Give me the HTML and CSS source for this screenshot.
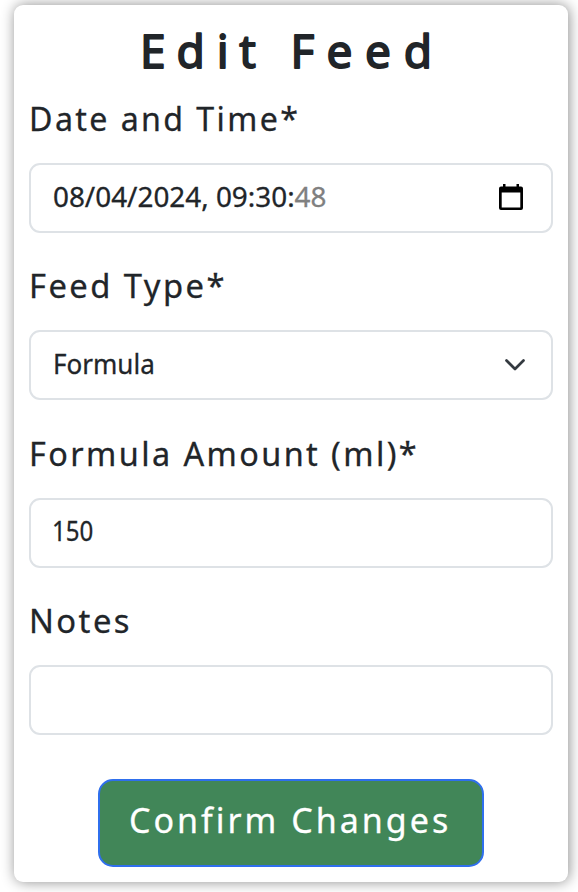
FILE: index.html
```html
<!DOCTYPE html>
<html lang="en">
<head>
<meta charset="utf-8">
<title>Edit Feed</title>
<link rel="stylesheet" href="styles.css">
</head>
<body>
<main class="card">
  <h1 class="title"><svg class="title-art" viewBox="0 0 524 87"><text y="63" x="111 147.500 187.800 210.300 234 261.500 297.500 336 374.800">Edit Feed</text></svg></h1>
  <form class="form">
    <div class="field">
      <label class="label"><span class="text date-label">Date and Time*</span></label>
      <div class="control"><span class="text date">08/04/2024, 09:30:<span class="muted">48</span></span>
        <svg class="calendar" viewBox="0 0 24 26"><path fill="#000" fill-rule="evenodd" d="M4 0h2.500v2.500h11V0H20v2.500h2A2 2 0 0 1 24 4.500V24a2 2 0 0 1-2 2H2A2 2 0 0 1 0 24V4.500a2 2 0 0 1 2-2h2zM2.700 8.500v14.900h18.600V8.500z"/></svg>
      </div>
    </div>
    <div class="field">
      <label class="label"><span class="text type-label">Feed Type*</span></label>
      <div class="control"><span class="text formula">Formula</span>
        <svg class="chevron" viewBox="0 0 20 12"><path d="M1.500 1.500 10 10l8.500-8.500" fill="none" stroke="#343a40" stroke-width="2.700" stroke-linecap="round" stroke-linejoin="round"/></svg>
      </div>
    </div>
    <div class="field">
      <label class="label"><span class="text amount-label">Formula Amount (ml)*</span></label>
      <div class="control"><span class="text amount">150</span></div>
    </div>
    <div class="field">
      <label class="label"><span class="text notes-label">Notes</span></label>
      <div class="control"></div>
    </div>
    <button class="submit" type="button"><span class="text confirm">Confirm Changes</span></button>
  </form>
</main>
</body>
</html>
```
FILE: styles.css
```css
* { box-sizing: border-box; }
body {
  margin: 0;
  height: 892px;
  overflow: hidden;
  background: #fff;
  color: #212529;
  font-family: "Noto Sans", sans-serif;
}
.card {
  width: 554px;
  height: 877px;
  margin: 5px 0 0 14px;
  padding: 0 15px;
  border-radius: 9px;
  background: #fff;
  box-shadow: 1px 0 14px rgba(0, 0, 0, .45);
}
.title {
  height: 88px;
  margin: 0;
  font-size: 46px;
  font-weight: 400;
}
.title-art {
  display: block;
  width: 524px;
  height: 87px;
  fill: #212529;
  stroke: #212529;
  stroke-width: 1.800px;
  stroke-linejoin: round;
}
.form { display: flex; flex-direction: column; }
.field { margin-bottom: 26.33px; }
.label {
  display: block;
  height: 51px;
  margin-bottom: 19px;
  font-size: 33.500px;
  line-height: 51px;
  letter-spacing: 2.500px;
}
.text {
  display: inline-block;
  transform-origin: left center;
  white-space: nowrap;
  -webkit-text-stroke: .3px currentColor;
}
.label .text { transform: scaleX(.978); }
.label .date-label { transform: scaleX(.96); }
.label .amount-label { transform: scaleX(.967); }
.control {
  display: flex;
  align-items: center;
  justify-content: space-between;
  height: 71px;
  padding: 0 28px 0 22px;
  border: 2px solid #dee2e6;
  border-radius: 11px;
  font-size: 28px;
}
.control { height: 70px; margin-bottom: 27.33px; }
.field { margin-bottom: 0; }
.control .text { padding-bottom: 5px; }
.date { transform: scaleX(.995); }
.formula { transform: scaleX(.93); }
.amount { margin-left: -1px; transform: scaleX(.86); }
.muted { color: #808080; }
.calendar { width: 24px; height: 26px; margin-bottom: 2px; }
.chevron { width: 20px; height: 12px; margin-right: -2px; }
.submit {
  align-self: center;
  width: 386px;
  height: 88px;
  margin-top: 17px;
  padding: 0 0 7px 29px;
  border: 2px solid #2f6fed;
  border-radius: 15px;
  background: #418658;
  color: #fff;
  font-family: inherit;
  font-size: 34px;
  letter-spacing: 3px;
  text-align: left;
}
```
